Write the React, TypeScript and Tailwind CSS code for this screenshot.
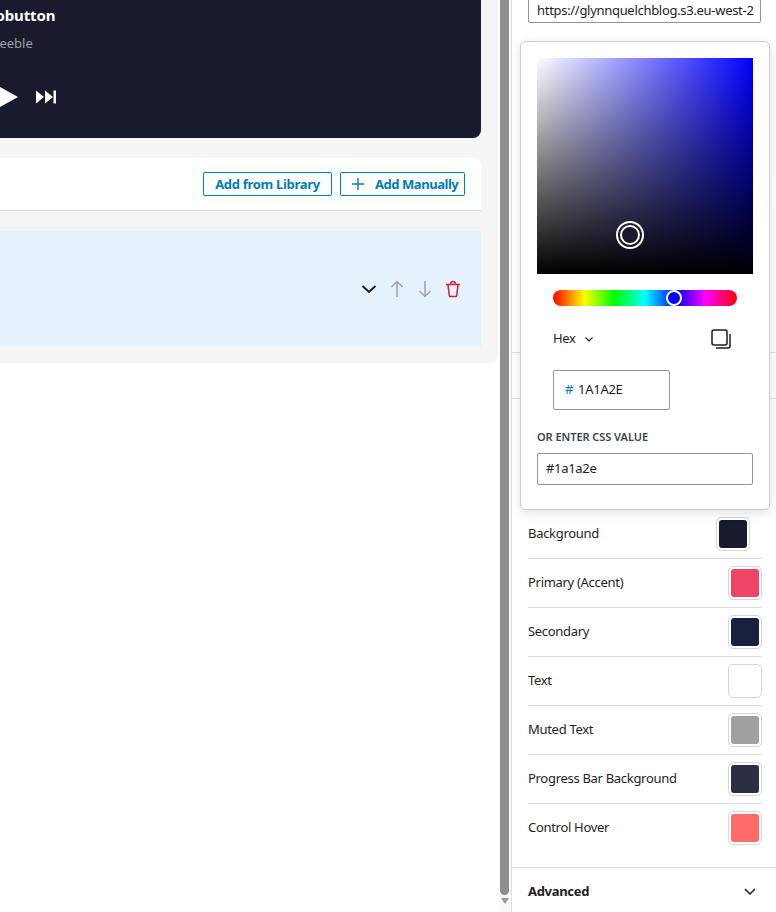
import React from 'react';

const colors = [
  { label: 'Primary (Accent)', value: '#ef4565' },
  { label: 'Secondary', value: '#16213e' },
  { label: 'Text', value: '#ffffff' },
  { label: 'Muted Text', value: '#a0a0a0' },
  { label: 'Progress Bar Background', value: '#2d2d44' },
  { label: 'Control Hover', value: '#ff6b6b' },
];

const Swatch = ({ value }: { value: string }) => (
  <div className="w-[34px] h-[34px] rounded-[5px] border border-[#d6d6d6] p-[2px] bg-white">
    <div className="w-full h-full rounded-[3px]" style={{ backgroundColor: value }} />
  </div>
);

const Main = () => (
  <div className="w-[500px] shrink-0 overflow-hidden">
    <div className="w-[498px] pr-[17px] pb-4 bg-[#f5f5f5] rounded-br-lg">
      <div className="h-[138px] bg-[#1a1a2e] rounded-br-lg pt-[5px] overflow-hidden">
        <p className="-ml-[33px] text-[15px] leading-[20px] font-bold text-white tracking-[-0.1px]">Robobutton</p>
        <p className="-ml-[9px] mt-[9px] text-[13px] leading-[18px] text-[#a0a0a0] tracking-normal">Beeble</p>
        <div className="flex items-center gap-[17px] mt-[34px] -ml-px">
          <svg width="20" height="22" viewBox="0 0 20 22" className="block">
            <path d="M0 0.5 L19 11 L0 21.5 Z" fill="#fff" />
          </svg>
          <svg width="20" height="14" viewBox="0 0 20 14" className="block">
            <path d="M0 0.5 L8 7 L0 13.5 Z M9 0.5 L17 7 L9 13.5 Z" fill="#fff" />
            <rect x="17.5" y="0.5" width="2.5" height="13" fill="#fff" />
          </svg>
        </div>
      </div>
      <div className="mt-5 h-[53px] bg-white border-b border-[#dcdcde] rounded-tr-lg flex items-center justify-end gap-2 pr-4">
        <button className="h-6 w-[129px] rounded-[2px] border border-[#007cba] text-[#007cba] text-[13px] font-bold leading-none">
          Add from Library
        </button>
        <button className="h-6 w-[125px] rounded-[2px] border border-[#007cba] text-[#007cba] text-[13px] font-bold leading-none tracking-[-0.45px] flex items-center pl-[8px]">
          <svg width="18" height="18" viewBox="0 0 18 18" fill="none" stroke="#007cba" strokeWidth="1.4" className="mr-[8px]">
            <path d="M9 3 V15 M3 9 H15" />
          </svg>
          Add Manually
        </button>
      </div>
      <div className="mt-5 h-[116px] bg-[#e5f1fc] flex items-center justify-end gap-[12px] pr-[20px]">
        <svg width="16" height="16" viewBox="0 0 16 16" fill="none" stroke="#1e1e1e" strokeWidth="2">
          <path d="M1.5 5 L8 11 L14.5 5" />
        </svg>
        <svg width="16" height="18" viewBox="0 0 16 18" fill="none" stroke="#a3a3a3" strokeWidth="1.5">
          <path d="M8 17 V2 M2.5 7 L8 1.5 L13.5 7" />
        </svg>
        <svg width="16" height="18" viewBox="0 0 16 18" fill="none" stroke="#a3a3a3" strokeWidth="1.5">
          <path d="M8 1 V16 M2.5 11 L8 16.5 L13.5 11" />
        </svg>
        <svg width="16" height="18" viewBox="0 0 16 18" fill="none" stroke="#d8202a" strokeWidth="1.5">
          <path d="M1 4.5 H15 M3 5 L4.3 15.5 Q4.5 16.5 5.5 16.5 H10.5 Q11.5 16.5 11.7 15.5 L13 5 M5.5 4.5 Q5.5 1.5 8 1.5 Q10.5 1.5 10.5 4.5" />
        </svg>
      </div>
    </div>
  </div>
);

const Scrollbar = () => (
  <div className="w-[11px] shrink-0 h-[912px] bg-[#f8f8f8] flex flex-col items-start">
    <div className="w-[9px] h-[895px] bg-[#8f8f8f] rounded-b-[5px]" />
    <div className="mt-[3px] w-0 h-0 border-x-[4px] border-x-transparent border-t-[6px] border-t-[#9a9a9a] ml-px" />
  </div>
);

const ColorPopover = () => (
  <div className="absolute left-[8px] top-[41px] w-[250px] h-[469px] bg-white border border-[#cccccc] rounded-[5px] shadow-[0_3px_12px_rgba(0,0,0,0.12)] pt-4 px-4">
    <div className="relative w-[216px] h-[216px] bg-[linear-gradient(to_top,#000,transparent),linear-gradient(to_right,#fff,#0000ff)]">
      <div className="absolute left-[79px] top-[163px] w-[28px] h-[28px] rounded-full border-2 border-white flex items-center justify-center">
        <div className="w-[20px] h-[20px] rounded-full border-2 border-white bg-[#1a1a2e]" />
      </div>
    </div>
    <div className="relative ml-4 mt-4 w-[184px] h-4 rounded-full bg-[linear-gradient(to_right,#f00_0%,#ff0_17%,#0f0_33%,#0ff_50%,#00f_67%,#f0f_83%,#f00_100%)]">
      <div className="absolute left-[113px] top-0 w-4 h-4 rounded-full bg-[#0000ff] border-2 border-white" />
    </div>
    <div className="ml-4 mt-[23px] h-[20px] w-[184px] flex items-center justify-between pr-[6px]">
      <div className="flex items-center gap-[9px] text-[13px] text-[#1e1e1e]">
        Hex
        <svg width="8" height="5" viewBox="0 0 8 5" fill="none" stroke="#1e1e1e" strokeWidth="1.1">
          <path d="M0.5 0.5 L4 4 L7.5 0.5" />
        </svg>
      </div>
      <svg width="20" height="20" viewBox="0 0 20 20" fill="none" stroke="#1e1e1e" strokeWidth="1.5">
        <rect x="1" y="1" width="15" height="15" rx="2" />
        <path d="M19 5 V17 Q19 19 17 19 H5" />
      </svg>
    </div>
    <div className="ml-4 mt-[21px] w-[117px] h-10 rounded-[2px] border border-[#949494] flex items-center pl-[11px] text-[13px] text-[#1e1e1e]">
      <span className="text-[#007cba] mr-[5px]">#</span>1A1A2E
    </div>
    <div className="mt-[20px] text-[11px] leading-[14px] font-semibold uppercase text-[#3c434a] tracking-[-0.05px]">Or enter CSS value</div>
    <div className="mt-[9px] w-[216px] h-8 rounded-[2px] border border-[#949494] flex items-center pl-2 text-[13px] text-[#1e1e1e]">
      #1a1a2e
    </div>
  </div>
);

const Sidebar = () => (
  <div className="relative flex-1 h-[912px] border-l border-[#e0e0e0] bg-white text-[13px] text-[#1e1e1e] overflow-hidden">
    <div className="mx-4 w-[233px] h-6 -mt-px rounded-[2px] border border-[#949494] flex items-center pl-2 pr-[6px]">
      <div className="overflow-hidden whitespace-nowrap">https://glynnquelchblog.s3.eu-west-2.amazonaws.com</div>
    </div>
    <div className="mt-[329px] border-t border-[#e0e0e0] h-[46px]" />
    <div className="border-t border-[#e0e0e0] h-[112px]" />
    <div className="mx-4 w-[234px]">
      <div className="h-[49px] border-b border-[#dddddd] flex items-center justify-between pr-3">
        <span>Background</span>
        <Swatch value="#1a1a2e" />
      </div>
      {colors.map((c, i) => (
        <div
          key={c.label}
          className={`h-[49px] flex items-center justify-between border-b ${i < colors.length - 1 ? 'border-[#dddddd]' : 'border-transparent'}`}
        >
          <span>{c.label}</span>
          <Swatch value={c.value} />
        </div>
      ))}
    </div>
    <div className="mt-[14px] border-t border-[#e0e0e0] h-[48px] pl-4 pr-5 flex items-center justify-between font-bold">
      Advanced
      <svg width="12" height="8" viewBox="0 0 12 8" fill="none" stroke="#1e1e1e" strokeWidth="1.5">
        <path d="M1 1 L6 6 L11 1" />
      </svg>
    </div>
    <ColorPopover />
  </div>
);

export default function App() {
  return (
    <div className="flex h-[912px] w-[776px] overflow-hidden bg-white font-['Noto_Sans',sans-serif] tracking-[-0.3px]">
      <Main />
      <Scrollbar />
      <Sidebar />
    </div>
  );
}
